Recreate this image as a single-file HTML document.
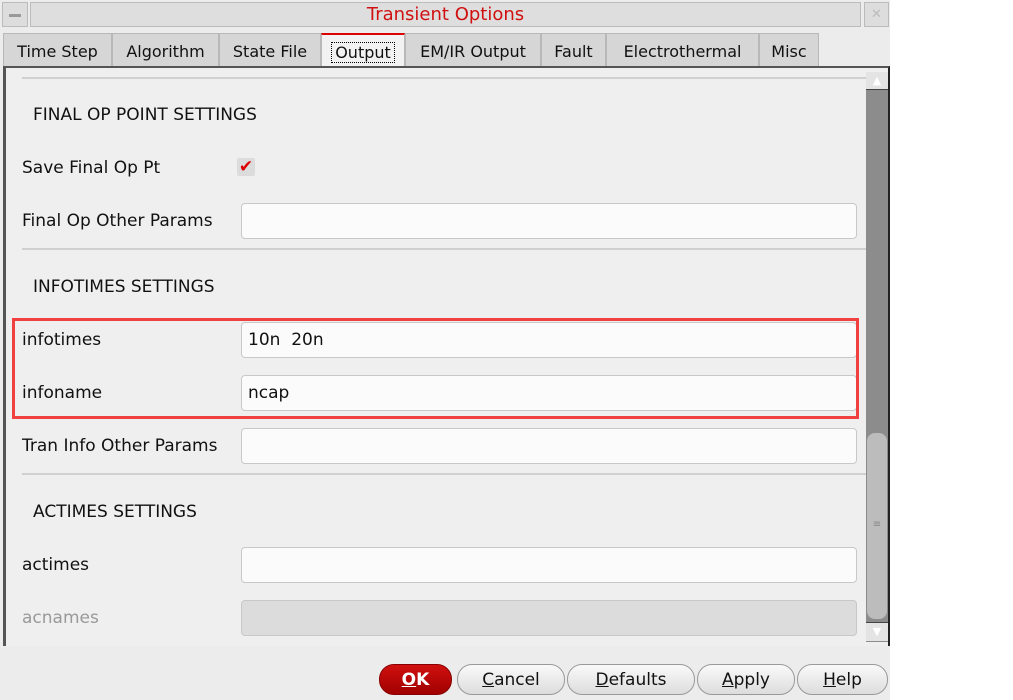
<!DOCTYPE html>
<html><head><style>
body{margin:0;width:1013px;height:700px;background:#fff;font-family:"DejaVu Sans","Liberation Sans",sans-serif;font-size:16px;color:#111;position:relative;overflow:hidden}
.a{position:absolute}
.win{left:0;top:0;width:890px;height:700px;background:#ececec}
.tab{top:33px;height:33px;background:#d6d6d6;border:1px solid #b8b8b8;border-bottom:none;box-sizing:border-box;line-height:36px;text-align:center}
.fld{left:241px;width:616px;height:36px;background:#fbfbfb;border:1px solid #c8c8c8;border-radius:4px;box-sizing:border-box;padding-left:6px;line-height:34px;font-size:17px}
.lbl{left:22px;font-size:17px}
.hd{left:33px;font-size:17px}
.sep{left:22px;width:844px;height:2px;background:#d0d0d0}
.btn{top:664px;height:31px;border:1px solid #999;border-radius:15px;background:linear-gradient(#fafafa,#ddd);box-sizing:border-box;text-align:center;line-height:30px;font-size:17px}
</style></head><body>
<div class="a win"></div>
<div class="a" style="left:2px;top:2px;width:26px;height:25px;background:#ddd;border:1px solid #bbb;box-sizing:border-box"><div class="a" style="left:6px;top:11px;width:12px;height:3px;background:#999"></div></div>
<div class="a" style="left:30px;top:2px;width:831px;height:25px;background:#dedede;border:1px solid #bbb;box-sizing:border-box;text-align:center;color:#d01010;font-size:18px;line-height:24px">Transient Options</div>
<div class="a" style="left:864px;top:2px;width:25px;height:25px;background:#ddd;border:1px solid #bbb;box-sizing:border-box;color:#bbb;text-align:center;font-size:13px;line-height:24px">✕</div>
<div class="a tab" style="left:3px;width:109px">Time Step</div>
<div class="a tab" style="left:112px;width:107px">Algorithm</div>
<div class="a tab" style="left:219px;width:102px">State File</div>
<div class="a tab" style="left:321px;width:84px;background:#f2f2f2;border-top:2px solid #d00"><span style="border:1px dotted #000;padding:0 3px">Output</span></div>
<div class="a tab" style="left:405px;width:136px">EM/IR Output</div>
<div class="a tab" style="left:541px;width:65px">Fault</div>
<div class="a tab" style="left:606px;width:153px">Electrothermal</div>
<div class="a tab" style="left:759px;width:60px">Misc</div>
<div class="a" style="left:3px;top:66px;width:887px;height:580px;border-top:2px solid #555;border-left:3px solid #555;border-right:2px solid #222;box-sizing:border-box;background:#efefef"></div>
<div class="a sep" style="top:77px"></div>
<div class="a hd" style="top:105px">FINAL OP POINT SETTINGS</div>
<div class="a lbl" style="top:158px">Save Final Op Pt</div>
<div class="a" style="left:237px;top:158px;width:18px;height:18px;background:#dcdcdc;border-radius:2px;color:#d00;font-size:17px;line-height:18px;text-align:center;font-weight:bold">✔</div>
<div class="a lbl" style="top:211px">Final Op Other Params</div>
<div class="a fld" style="top:203px"></div>
<div class="a sep" style="top:248px"></div>
<div class="a hd" style="top:277px">INFOTIMES SETTINGS</div>
<div class="a lbl" style="top:330px">infotimes</div>
<div class="a fld" style="top:322px">10n&nbsp; 20n</div>
<div class="a lbl" style="top:383px">infoname</div>
<div class="a fld" style="top:375px">ncap</div>
<div class="a" style="left:12px;top:318px;width:847px;height:101px;border:3px solid #f04040;box-sizing:border-box"></div>
<div class="a lbl" style="top:436px">Tran Info Other Params</div>
<div class="a fld" style="top:428px"></div>
<div class="a sep" style="top:473px"></div>
<div class="a hd" style="top:502px">ACTIMES SETTINGS</div>
<div class="a lbl" style="top:555px">actimes</div>
<div class="a fld" style="top:547px"></div>
<div class="a lbl" style="top:608px;color:#999">acnames</div>
<div class="a fld" style="top:600px;background:#dcdcdc"></div>
<div class="a" style="left:866px;top:72px;width:22px;height:570px;background:#8c8c8c"></div>
<div class="a" style="left:866px;top:72px;width:22px;height:17px;background:#e4e4e4;border-bottom:1px solid #444;color:#fff;font-size:11px;text-align:center;line-height:17px">▲</div>
<div class="a" style="left:867px;top:433px;width:20px;height:186px;background:#bcbcbc;border-radius:8px;color:#888;text-align:center;line-height:184px;font-size:10px">≡</div>
<div class="a" style="left:866px;top:622px;width:22px;height:18px;background:#e4e4e4;border-top:1px solid #444;color:#fff;font-size:11px;text-align:center;line-height:18px">▼</div>
<div class="a btn" style="left:379px;width:73px;background:linear-gradient(#d01010,#a00000);color:#fff;font-weight:bold;border-color:#800"><u>O</u>K</div>
<div class="a btn" style="left:457px;width:108px"><u>C</u>ancel</div>
<div class="a btn" style="left:567px;width:128px"><u>D</u>efaults</div>
<div class="a btn" style="left:697px;width:98px"><u>A</u>pply</div>
<div class="a btn" style="left:797px;width:91px"><u>H</u>elp</div>
</body></html>
